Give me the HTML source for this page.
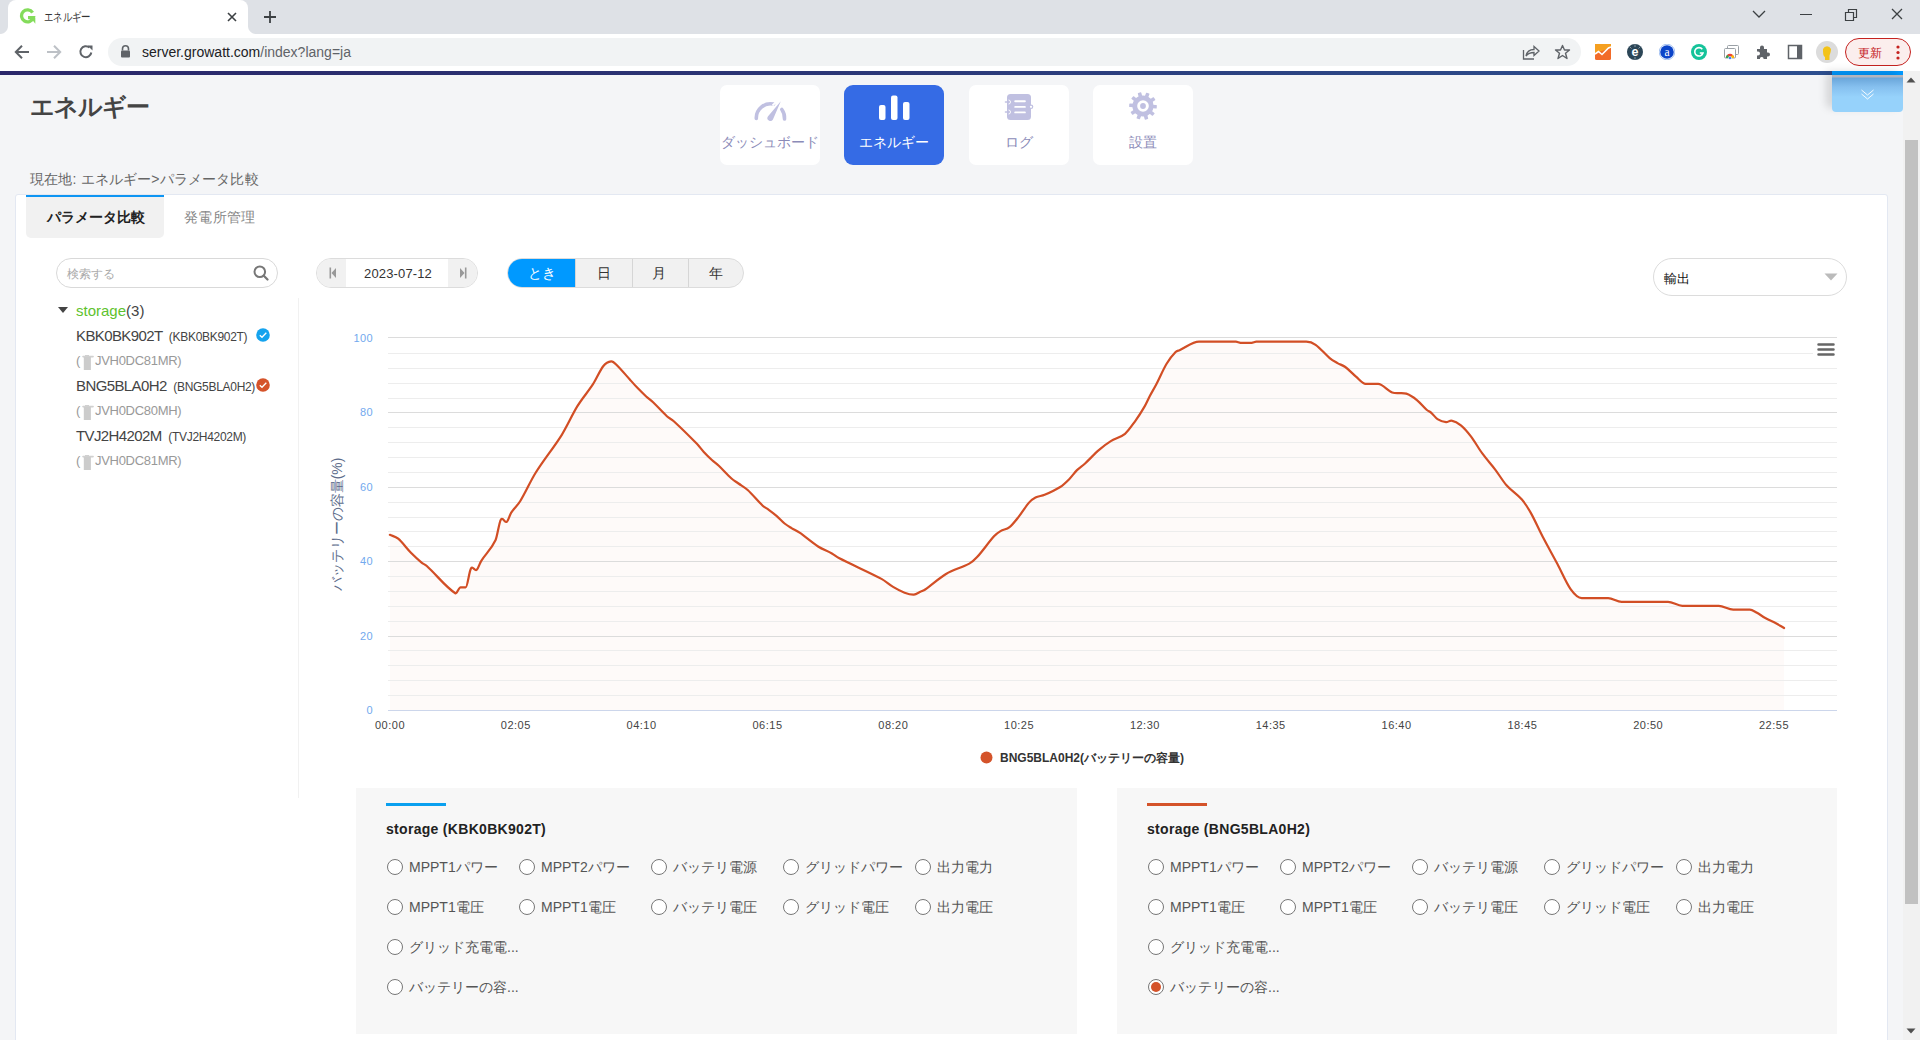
<!DOCTYPE html>
<html><head><meta charset="utf-8">
<style>
*{box-sizing:border-box;margin:0;padding:0}
html,body{width:1920px;height:1040px;overflow:hidden}
body{position:relative;font-family:"Liberation Sans",sans-serif;background:#f4f5f7;color:#333}
.a{position:absolute;white-space:nowrap}
#tabbar{left:0;top:0;width:1920px;height:34px;background:#dee1e6}
#tab{left:8px;top:0;width:240px;height:34px;background:#fff;border-radius:8px 8px 0 0}
#tab:before{content:"";position:absolute;left:-8px;bottom:0;width:8px;height:8px;background:radial-gradient(circle at 0 0,#dee1e6 7.5px,#fff 8.5px)}
#tab:after{content:"";position:absolute;right:-8px;bottom:0;width:8px;height:8px;background:radial-gradient(circle at 100% 0,#dee1e6 7.5px,#fff 8.5px)}
#toolbar{left:0;top:34px;width:1920px;height:37px;background:#fff}
#omni{left:108px;top:38px;width:1473px;height:28px;background:#f1f3f4;border-radius:14px}
#navy{left:0;top:71px;width:1832px;height:4px;background:linear-gradient(90deg,#2a276a 0%,#2b3474 40%,#2c4685 75%,#2d4f8f 100%)}
#navy2{left:1832px;top:71px;width:71px;height:4px;background:#0099ff}
#scroll{left:1903px;top:71px;width:17px;height:969px;background:#f1f1f1}
#thumb{left:1905px;top:140px;width:13px;height:764px;background:#c1c1c1}
#card{left:15px;top:194px;width:1873px;height:870px;background:#fff;border:1px solid #e3e8f2;border-radius:3px}
.nav{top:85px;width:100px;height:80px;background:#fff;border-radius:7px}
.nav .t{position:absolute;left:0;width:100%;top:133px;text-align:center}
.navt{top:134px;font-size:14px;color:#8b8bb8;text-align:center;width:100px}
.rad{width:16px;height:16px;border:1px solid #777;border-radius:50%;background:#fff}
.rl{font-size:14px;color:#555}
</style></head><body>
<div id="tabbar" class="a"></div>
<div id="tab" class="a"></div>
<div id="toolbar" class="a"></div>
<div id="omni" class="a"></div>
<div id="navy" class="a"></div>
<div id="navy2" class="a"></div>

<!-- tab contents -->
<svg class="a" style="left:19px;top:8px" width="18" height="17" viewBox="0 0 18 17"><path d="M13.6 4.6A6 6 0 1 0 14.3 9.6H9" fill="none" stroke="#84dc5b" stroke-width="3.3"/><path d="M11.5 9.6H16.3V15.8z" fill="#84dc5b"/></svg>
<div class="a" style="left:44px;top:9px;font-size:12px;color:#333;transform:scaleX(0.78);transform-origin:0 0">エネルギー</div>
<svg class="a" style="left:227px;top:12px" width="10" height="10" viewBox="0 0 10 10"><path d="M1 1L9 9M9 1L1 9" stroke="#3c4043" stroke-width="1.6"/></svg>
<svg class="a" style="left:263px;top:10px" width="14" height="14" viewBox="0 0 14 14"><path d="M7 1V13M1 7H13" stroke="#3c4043" stroke-width="1.8"/></svg>
<!-- window controls -->
<svg class="a" style="left:1752px;top:9px" width="14" height="10" viewBox="0 0 14 10"><path d="M1 2L7 8L13 2" fill="none" stroke="#3c4043" stroke-width="1.3"/></svg>
<div class="a" style="left:1800px;top:14px;width:12px;height:1px;background:#3c4043"></div>
<svg class="a" style="left:1844px;top:8px" width="14" height="14" viewBox="0 0 14 14"><path d="M1.5 4.5H9.5V12.5H1.5Z M4.5 4.5V1.5H12.5V9.5H9.5" fill="none" stroke="#3c4043" stroke-width="1.2"/></svg>
<svg class="a" style="left:1891px;top:8px" width="12" height="12" viewBox="0 0 12 12"><path d="M1 1L11 11M11 1L1 11" stroke="#3c4043" stroke-width="1.3"/></svg>
<!-- nav buttons -->
<svg class="a" style="left:14px;top:44px" width="16" height="16" viewBox="0 0 16 16"><path d="M15 8H2M8 1.8L1.8 8L8 14.2" fill="none" stroke="#5f6368" stroke-width="2"/></svg>
<svg class="a" style="left:46px;top:44px" width="16" height="16" viewBox="0 0 16 16"><path d="M1 8H14M8 1.8L14.2 8L8 14.2" fill="none" stroke="#bdc1c6" stroke-width="2"/></svg>
<svg class="a" style="left:78px;top:44px" width="16" height="16" viewBox="0 0 16 16"><path d="M13.3 8.5A5.5 5.5 0 1 1 11.5 3.6" fill="none" stroke="#5f6368" stroke-width="2"/><path d="M9.5 1.5H14.5V6.5Z" fill="#5f6368"/></svg>
<!-- omnibox -->
<svg class="a" style="left:120px;top:45px" width="11" height="13" viewBox="0 0 11 13"><path d="M2.5 5.5V3.8A3 3 0 0 1 8.5 3.8V5.5" fill="none" stroke="#5f6368" stroke-width="1.6"/><rect x="1" y="5.5" width="9" height="7" rx="1" fill="#5f6368"/></svg>
<div class="a" style="left:142px;top:44px;font-size:14px;color:#202124">server.growatt.com<span style="color:#5f6368">/index?lang=ja</span></div>
<svg class="a" style="left:1522px;top:44px" width="18" height="16" viewBox="0 0 18 16"><path d="M1.5 6V15H12" fill="none" stroke="#5f6368" stroke-width="1.3"/><path d="M4 12C5 7 8 5.5 12 5.5V2.5L17 7L12 11.5V8.5C8.5 8.5 6 9.5 4 12Z" fill="none" stroke="#5f6368" stroke-width="1.3"/></svg>
<svg class="a" style="left:1554px;top:44px" width="17" height="16" viewBox="0 0 17 16"><path d="M8.5 1.5L10.5 6H15.5L11.5 9.2L13 14.5L8.5 11.5L4 14.5L5.5 9.2L1.5 6H6.5Z" fill="none" stroke="#5f6368" stroke-width="1.4" stroke-linejoin="round"/></svg>
<!-- extensions -->
<svg class="a" style="left:1595px;top:44px" width="16" height="16" viewBox="0 0 16 16"><rect width="16" height="16" rx="1.5" fill="#f26b2a"/><path d="M0 0H16V4L0 9Z" fill="#f5a020"/><path d="M0 10L3.5 7.5L7 10.5L13.5 4L16 3" fill="none" stroke="#fff" stroke-width="1.6"/></svg>
<svg class="a" style="left:1627px;top:44px" width="16" height="16" viewBox="0 0 16 16"><circle cx="8" cy="8" r="8" fill="#2c4657"/><path d="M8 0.5V3M8 13V15.5M2.5 2.5L4.5 4.5M13.5 2.5L11.5 4.5" stroke="#9fb0bb" stroke-width="0.8"/><text x="8" y="12.2" font-size="12.5" font-weight="bold" fill="#fff" text-anchor="middle" font-family="Liberation Sans">e</text></svg>
<svg class="a" style="left:1659px;top:44px" width="16" height="16" viewBox="0 0 16 16"><circle cx="8" cy="8" r="7.8" fill="#fff" stroke="#8fb4ef" stroke-width="0.8"/><circle cx="8" cy="8" r="6.8" fill="#0b44c9"/><text x="8" y="11.8" font-size="11.5" fill="#fff" text-anchor="middle" font-family="Liberation Serif">a</text></svg>
<svg class="a" style="left:1691px;top:44px" width="16" height="16" viewBox="0 0 16 16"><circle cx="8" cy="8" r="8" fill="#15c39a"/><path d="M11.3 5.2A4.2 4.2 0 1 0 12 9H8.8" fill="none" stroke="#fff" stroke-width="1.6"/></svg>
<svg class="a" style="left:1723px;top:44px" width="17" height="16" viewBox="0 0 17 16"><rect x="4.5" y="1.5" width="11" height="9" rx="1" fill="#fff" stroke="#9aa0a6" stroke-width="1"/><rect x="1.5" y="4.5" width="11" height="9.5" rx="1" fill="#fff" stroke="#9aa0a6" stroke-width="1"/><path d="M2.8 14A4.2 4.2 0 0 1 11.2 14Z" fill="#ea4335"/><path d="M2.8 14A4.2 4.2 0 0 1 4.5 10.7L7 14Z" fill="#34a853"/><path d="M9.5 10.7A4.2 4.2 0 0 1 11.2 14H7Z" fill="#fbbc04"/><circle cx="7" cy="14" r="1.8" fill="#fff"/><circle cx="7" cy="14" r="1.3" fill="#4285f4"/></svg>
<svg class="a" style="left:1755px;top:44px" width="16" height="16" viewBox="0 0 16 16"><path d="M2 5H5V3.5A2 2 0 0 1 9 3.5V5H12V8.5H13A2 2 0 0 1 13 12.5H12V15H8.5V14A2 2 0 0 0 5 14V15H2V11.5H3A2 2 0 0 0 3 7.5H2Z" fill="#5f6368"/></svg>
<svg class="a" style="left:1787px;top:44px" width="16" height="16" viewBox="0 0 16 16"><rect x="1.5" y="1.5" width="13" height="13" fill="none" stroke="#5f6368" stroke-width="1.5"/><rect x="10" y="1.5" width="4.5" height="13" fill="#5f6368"/></svg>
<svg class="a" style="left:1816px;top:41px" width="22" height="22" viewBox="0 0 22 22"><circle cx="11" cy="11" r="11" fill="#dcdcdc"/><path d="M7 8A4.5 5 0 0 1 15 8C15 11 14 13 13.5 14.5V19H9V16C7 15 7 12 7 8Z" fill="#f3c318"/></svg>
<div class="a" style="left:1845px;top:38px;width:66px;height:28px;border:1.3px solid #c5221f;border-radius:14px;background:#fbeeed"></div>
<div class="a" style="left:1858px;top:45px;font-size:12px;color:#c5221f">更新</div>
<svg class="a" style="left:1895px;top:45px" width="6" height="15" viewBox="0 0 6 15"><circle cx="3" cy="2" r="1.6" fill="#c5221f"/><circle cx="3" cy="7.5" r="1.6" fill="#c5221f"/><circle cx="3" cy="13" r="1.6" fill="#c5221f"/></svg>

<!-- page header -->
<div class="a" style="left:30px;top:91px;font-size:24px;font-weight:bold;color:#444;letter-spacing:-1px">エネルギー</div>
<div class="a nav" style="left:720px"></div>
<div class="a nav" style="left:844px;background:#356be5;border-radius:9px"></div>
<div class="a nav" style="left:969px"></div>
<div class="a nav" style="left:1093px"></div>
<!-- icons -->
<svg class="a" style="left:745px;top:92px" width="50" height="36" viewBox="0 0 50 36"><path d="M11.3 26.5A14.2 14.2 0 0 1 28.5 12.1" fill="none" stroke="#c0c0e1" stroke-width="3.6" stroke-linecap="round"/><path d="M36.8 17.5A14.2 14.2 0 0 1 39.5 27" fill="none" stroke="#c0c0e1" stroke-width="3.6" stroke-linecap="round"/><path d="M35.8 9.2L27.95 27.58A3 3 0 0 1 22.85 24.42Z" fill="#c0c0e1"/><path d="M27.5 13.5L31 10" stroke="#fff" stroke-width="1.8"/></svg>
<svg class="a" style="left:878px;top:95px" width="32" height="26" viewBox="0 0 32 26"><rect x="1" y="10" width="6.5" height="15" rx="2" fill="#fff"/><rect x="13" y="0.5" width="6.5" height="24.5" rx="2" fill="#fff"/><rect x="25" y="7" width="6.5" height="18" rx="2" fill="#fff"/></svg>
<svg class="a" style="left:1000px;top:88px" width="40" height="36" viewBox="0 0 40 36"><rect x="7" y="6" width="24" height="26" rx="3.5" fill="#c0c0e1"/><path d="M5.5 14H9M5.5 24H9" stroke="#c0c0e1" stroke-width="1.6" stroke-linecap="round"/><path d="M8.5 12A2 2 0 0 1 8.5 16M8.5 22A2 2 0 0 1 8.5 26" fill="none" stroke="#fff" stroke-width="0.9"/><circle cx="31" cy="18.8" r="2.3" fill="#c0c0e1"/><circle cx="31" cy="18.8" r="1.1" fill="#fff"/><path d="M15.2 13.3H24.9M15.2 18.9H24.9M15.2 24.4H24.9" stroke="#fff" stroke-width="1.9" stroke-linecap="round"/></svg>
<svg class="a" style="left:1125px;top:88px" width="36" height="36" viewBox="0 0 36 36"><g fill="#c0c0e1"><circle cx="18" cy="18" r="10.6"/><rect x="16.2" y="4.2" width="3.6" height="27.6" rx="0.6" transform="rotate(-15 18 18)"/><rect x="16.2" y="4.2" width="3.6" height="27.6" rx="0.6" transform="rotate(21 18 18)"/><rect x="16.2" y="4.2" width="3.6" height="27.6" rx="0.6" transform="rotate(57 18 18)"/><rect x="16.2" y="4.2" width="3.6" height="27.6" rx="0.6" transform="rotate(93 18 18)"/><rect x="16.2" y="4.2" width="3.6" height="27.6" rx="0.6" transform="rotate(129 18 18)"/></g><circle cx="18" cy="18" r="5.8" fill="#fff"/><circle cx="18" cy="18" r="2.9" fill="#c0c0e1"/></svg>
<div class="a navt" style="left:720px">ダッシュボード</div>
<div class="a navt" style="left:844px;color:#fff">エネルギー</div>
<div class="a navt" style="left:969px">ログ</div>
<div class="a navt" style="left:1093px">設置</div>

<div class="a" style="left:30px;top:171px;font-size:14px;color:#666;letter-spacing:0.15px">現在地: エネルギー&gt;パラメータ比較</div>

<div id="card" class="a"></div>
<div class="a" style="left:26px;top:195px;width:138px;height:43px;background:#f1f1f1;border-top:2px solid #0d95f3;border-radius:0 0 5px 5px"></div>
<div class="a" style="left:47px;top:209px;font-size:14px;font-weight:bold;color:#222">パラメータ比較</div>
<div class="a" style="left:184px;top:209px;font-size:14px;color:#888;letter-spacing:0.3px">発電所管理</div>

<!-- sidebar -->
<div class="a" style="left:56px;top:258px;width:222px;height:30px;border:1px solid #d9d9d9;border-radius:15px;background:#fff"></div>
<div class="a" style="left:67px;top:266px;font-size:12px;color:#aaa">検索する</div>
<svg class="a" style="left:253px;top:265px" width="16" height="16" viewBox="0 0 16 16"><circle cx="6.8" cy="6.8" r="5.3" fill="none" stroke="#777" stroke-width="2"/><path d="M10.8 10.8L14.5 14.5" stroke="#777" stroke-width="2.2" stroke-linecap="round"/></svg>
<div class="a" style="left:298px;top:298px;width:1px;height:500px;background:#f1f1f1"></div>
<svg class="a" style="left:58px;top:307px" width="10" height="7" viewBox="0 0 10 7"><path d="M0 0H10L5 6Z" fill="#444"/></svg>
<div class="a" style="left:76px;top:302px;font-size:15px;color:#5ec22e">storage<span style="color:#444">(3)</span></div>

<div class="a" style="left:76px;top:327px;font-size:15px;color:#444;letter-spacing:-0.6px">KBK0BK902T <span style="font-size:12px;letter-spacing:-0.3px;margin-left:3px">(KBK0BK902T)</span></div>
<svg class="a" style="left:256px;top:328px" width="14" height="14" viewBox="0 0 14 14"><circle cx="7" cy="7" r="6.8" fill="#15a3ee"/><path d="M3.8 7.2L6 9.3L10.3 4.8" fill="none" stroke="#fff" stroke-width="1.3"/></svg>
<div class="a" style="left:76px;top:353px;font-size:13px;color:#999;letter-spacing:-0.3px">(<span style="display:inline-block;width:11px;height:14px;vertical-align:-2px;margin:0 2px"></span>JVH0DC81MR)</div>
<div class="a" style="left:76px;top:377px;font-size:15px;color:#444;letter-spacing:-0.6px">BNG5BLA0H2 <span style="font-size:12px;letter-spacing:-0.3px;margin-left:3px">(BNG5BLA0H2)</span></div>
<svg class="a" style="left:256px;top:378px" width="14" height="14" viewBox="0 0 14 14"><circle cx="7" cy="7" r="6.8" fill="#d5532a"/><path d="M3.8 7.2L6 9.3L10.3 4.8" fill="none" stroke="#fff" stroke-width="1.3"/></svg>
<div class="a" style="left:76px;top:403px;font-size:13px;color:#999;letter-spacing:-0.3px">(<span style="display:inline-block;width:11px;height:14px;vertical-align:-2px;margin:0 2px"></span>JVH0DC80MH)</div>
<div class="a" style="left:76px;top:427px;font-size:15px;color:#444;letter-spacing:-0.6px">TVJ2H4202M <span style="font-size:12px;letter-spacing:-0.3px;margin-left:3px">(TVJ2H4202M)</span></div>
<div class="a" style="left:76px;top:453px;font-size:13px;color:#999;letter-spacing:-0.3px">(<span style="display:inline-block;width:11px;height:14px;vertical-align:-2px;margin:0 2px"></span>JVH0DC81MR)</div>
<svg class="a" style="left:82px;top:354px" width="12" height="16" viewBox="0 0 12 16"><rect x="3" y="1" width="4" height="1.5" fill="#d0d0d0"/><rect x="0.2" y="1.8" width="11.7" height="1.6" rx="0.8" fill="#d0d0d0"/><rect x="1.8" y="3" width="7.1" height="13" fill="#cccccc"/></svg>
<svg class="a" style="left:82px;top:404px" width="12" height="16" viewBox="0 0 12 16"><rect x="3" y="1" width="4" height="1.5" fill="#d0d0d0"/><rect x="0.2" y="1.8" width="11.7" height="1.6" rx="0.8" fill="#d0d0d0"/><rect x="1.8" y="3" width="7.1" height="13" fill="#cccccc"/></svg>
<svg class="a" style="left:82px;top:454px" width="12" height="16" viewBox="0 0 12 16"><rect x="3" y="1" width="4" height="1.5" fill="#d0d0d0"/><rect x="0.2" y="1.8" width="11.7" height="1.6" rx="0.8" fill="#d0d0d0"/><rect x="1.8" y="3" width="7.1" height="13" fill="#cccccc"/></svg>

<!-- date picker -->
<div class="a" style="left:316px;top:258px;width:162px;height:30px;border:1px solid #dcdcdc;border-radius:15px;background:#fff;overflow:hidden">
  <div class="a" style="left:0;top:0;width:29px;height:28px;background:#f1f1f1"></div>
  <div class="a" style="right:0;top:0;width:29px;height:28px;background:#f1f1f1"></div>
</div>
<svg class="a" style="left:329px;top:267px" width="8" height="12" viewBox="0 0 8 12"><rect x="0.5" y="0.5" width="1.6" height="11" fill="#999"/><path d="M7 1V11L2.5 6Z" fill="#999"/></svg>
<svg class="a" style="left:459px;top:267px" width="8" height="12" viewBox="0 0 8 12"><rect x="5.9" y="0.5" width="1.6" height="11" fill="#999"/><path d="M1 1V11L5.5 6Z" fill="#999"/></svg>
<div class="a" style="left:364px;top:266px;font-size:13px;color:#333;letter-spacing:0.15px">2023-07-12</div>

<div class="a" style="left:507px;top:258px;width:237px;height:30px;border:1px solid #dcdcdc;border-radius:15px;background:#f1f1f1;overflow:hidden">
  <div class="a" style="left:-1px;top:-1px;width:69px;height:30px;background:#0099ff"></div>
  <div class="a" style="left:124px;top:0;width:1px;height:28px;background:#d6d6d6"></div>
  <div class="a" style="left:180px;top:0;width:1px;height:28px;background:#d6d6d6"></div>
  <div class="a" style="left:67px;top:0;width:1px;height:28px;background:#d6d6d6"></div>
</div>
<div class="a" style="left:528px;top:265px;font-size:14px;color:#fff">とき</div>
<div class="a" style="left:597px;top:265px;font-size:14px;color:#333">日</div>
<div class="a" style="left:652px;top:265px;font-size:14px;color:#333">月</div>
<div class="a" style="left:709px;top:265px;font-size:14px;color:#333">年</div>

<div class="a" style="left:1653px;top:258px;width:194px;height:38px;border:1px solid #dcdcdc;border-radius:19px;background:#fff"></div>
<div class="a" style="left:1664px;top:270px;font-size:13px;color:#111">輸出</div>
<svg class="a" style="left:1824px;top:273px" width="14" height="8" viewBox="0 0 14 8"><path d="M0.5 0.5H13.5L7 7.5Z" fill="#bbb"/></svg>

<!-- chart -->
<svg class="a" style="left:0;top:0" width="1920" height="1040" viewBox="0 0 1920 1040">
<path d="M389.9 534.8 C392.7 536.1 395.4 536.3 398.2 538.7 C402.5 542.4 406.9 548.6 411.2 553.0 C414.7 556.5 418.1 559.7 421.6 562.6 C423.3 564.0 425.1 564.4 426.8 566.0 C436.3 574.6 445.8 587.2 455.3 593.2 C457.0 594.3 458.8 587.3 460.5 587.3 C462.2 587.3 464.0 587.3 465.7 587.3 C467.4 587.3 469.2 571.4 470.9 568.6 C472.8 565.6 474.7 571.3 476.6 569.9 C478.2 568.7 479.7 563.3 481.3 560.8 C486.1 553.3 490.8 550.0 495.6 540.0 C497.3 536.3 499.1 522.5 500.8 519.7 C502.8 516.5 504.8 523.1 506.8 521.8 C508.3 520.8 509.7 515.0 511.2 512.7 C514.2 508.0 517.3 506.0 520.3 501.0 C525.5 492.6 530.6 480.7 535.8 472.5 C544.5 458.7 553.1 448.6 561.8 434.8 C567.0 426.5 572.2 414.6 577.4 406.2 C582.6 397.8 587.8 392.2 593.0 384.2 C596.5 378.8 599.9 370.4 603.4 366.0 C606.0 362.7 608.6 361.6 611.2 361.3 C612.9 361.1 614.7 363.0 616.4 364.7 C620.7 368.9 625.1 374.2 629.4 379.0 C631.9 381.8 634.4 384.7 636.9 387.3 C640.0 390.5 643.1 393.6 646.2 396.5 C648.5 398.6 650.8 400.1 653.1 402.3 C657.7 406.7 662.3 412.0 666.9 416.2 C669.2 418.3 671.5 419.1 673.8 421.2 C681.5 428.3 689.2 435.9 696.9 443.8 C699.2 446.2 701.5 449.4 703.8 451.9 C706.5 454.8 709.2 457.5 711.9 460.0 C714.2 462.1 716.5 463.6 718.8 465.8 C723.0 469.8 727.3 474.7 731.5 478.5 C733.8 480.6 736.2 481.8 738.5 483.5 C741.6 485.7 744.6 487.2 747.7 490.0 C752.7 494.6 757.7 501.0 762.7 505.7 C764.6 507.5 766.6 508.2 768.5 509.6 C771.2 511.6 773.8 513.5 776.5 515.8 C779.2 518.1 781.9 521.3 784.6 523.5 C786.9 525.4 789.2 526.7 791.5 528.1 C794.2 529.8 796.9 530.8 799.6 532.7 C805.8 537.0 811.9 542.5 818.1 546.5 C822.7 549.5 827.3 550.9 831.9 553.5 C834.2 554.8 836.6 556.9 838.9 558.1 C853.1 565.4 867.3 571.4 881.5 578.9 C885.4 581.0 889.2 584.6 893.1 586.9 C896.9 589.2 900.8 591.3 904.6 592.7 C907.7 593.8 910.8 594.8 913.9 594.6 C916.2 594.4 918.5 592.6 920.8 591.6 C922.3 590.9 923.7 590.5 925.2 589.5 C932.1 584.7 939.1 578.1 946.0 574.0 C953.8 569.4 961.5 567.8 969.3 563.6 C971.9 562.2 974.5 560.0 977.1 557.1 C982.7 550.9 988.4 542.6 994.0 536.3 C996.2 533.9 998.3 532.4 1000.5 531.1 C1003.5 529.3 1006.5 529.6 1009.5 527.2 C1012.5 524.8 1015.6 520.7 1018.6 516.9 C1022.1 512.5 1025.5 506.6 1029.0 502.6 C1031.2 500.1 1033.3 498.5 1035.5 497.4 C1038.5 495.9 1041.6 496.1 1044.6 494.8 C1049.8 492.6 1055.0 490.3 1060.2 487.0 C1063.2 485.1 1066.2 482.2 1069.2 479.2 C1071.8 476.6 1074.4 472.7 1077.0 470.1 C1079.6 467.5 1082.2 466.1 1084.8 463.7 C1089.6 459.3 1094.3 454.0 1099.1 449.9 C1103.0 446.5 1106.9 443.5 1110.8 441.1 C1115.5 438.2 1120.3 437.7 1125.0 433.8 C1128.5 430.9 1131.9 425.6 1135.4 420.8 C1138.4 416.6 1141.5 411.8 1144.5 406.6 C1146.2 403.6 1148.0 399.5 1149.7 396.2 C1151.9 392.1 1154.0 388.7 1156.2 384.5 C1159.7 377.8 1163.1 369.5 1166.6 363.7 C1169.6 358.7 1172.6 355.2 1175.6 352.1 C1176.9 350.7 1178.2 350.8 1179.5 350.2 C1186.0 347.3 1192.5 341.7 1199.0 341.7 C1201.0 341.7 1203.0 341.7 1205.0 341.7 C1213.3 341.7 1221.7 341.7 1230.0 341.7 C1232.0 341.7 1233.9 341.7 1235.9 341.7 C1237.5 341.7 1239.0 342.8 1240.6 342.8 C1244.3 342.8 1247.9 342.8 1251.6 342.8 C1253.2 342.8 1254.7 341.7 1256.3 341.7 C1258.2 341.7 1260.1 341.7 1262.0 341.7 C1274.7 341.7 1287.3 341.7 1300.0 341.7 C1302.1 341.7 1304.2 341.7 1306.3 341.7 C1309.4 341.7 1312.5 342.6 1315.6 344.8 C1320.3 348.1 1325.0 354.2 1329.7 358.1 C1332.3 360.3 1334.9 361.6 1337.5 363.1 C1340.1 364.6 1342.7 365.1 1345.3 367.0 C1349.0 369.7 1352.6 373.8 1356.3 376.9 C1359.4 379.5 1362.5 383.9 1365.6 383.9 C1369.8 383.9 1373.9 383.9 1378.1 383.9 C1382.8 383.9 1387.5 390.9 1392.2 392.5 C1396.9 394.1 1401.6 392.1 1406.3 393.6 C1409.9 394.7 1413.6 397.4 1417.2 400.3 C1420.3 402.8 1423.5 406.9 1426.6 409.7 C1428.2 411.1 1429.7 411.4 1431.3 412.8 C1433.4 414.6 1435.4 417.8 1437.5 419.1 C1440.4 420.9 1443.2 421.9 1446.1 422.2 C1447.9 422.4 1449.8 420.2 1451.6 420.6 C1454.7 421.2 1457.8 422.8 1460.9 425.3 C1464.3 428.1 1467.7 432.1 1471.1 436.6 C1474.8 441.4 1478.4 448.2 1482.1 453.2 C1486.5 459.3 1491.0 464.0 1495.4 469.8 C1499.1 474.7 1502.8 481.1 1506.5 485.3 C1511.6 491.1 1516.8 493.8 1521.9 499.6 C1524.9 503.0 1527.8 507.6 1530.8 512.9 C1534.9 520.2 1538.9 529.5 1543.0 537.3 C1547.8 546.5 1552.5 554.8 1557.3 563.8 C1561.7 572.1 1566.2 583.0 1570.6 589.2 C1574.3 594.4 1578.0 598.1 1581.7 598.1 C1584.5 598.1 1587.2 598.1 1590.0 598.1 C1593.3 598.1 1596.7 598.1 1600.0 598.1 C1602.7 598.1 1605.5 598.1 1608.2 598.1 C1612.6 598.1 1617.1 601.9 1621.5 601.9 C1624.3 601.9 1627.2 601.9 1630.0 601.9 C1640.0 601.9 1650.0 601.9 1660.0 601.9 C1662.7 601.9 1665.3 601.9 1668.0 601.9 C1672.8 601.9 1677.5 605.8 1682.3 605.8 C1684.9 605.8 1687.4 605.8 1690.0 605.8 C1697.0 605.8 1704.0 605.8 1711.0 605.8 C1713.6 605.8 1716.2 605.8 1718.8 605.8 C1723.6 605.8 1728.4 609.6 1733.2 609.6 C1735.8 609.6 1738.4 609.6 1741.0 609.6 C1743.9 609.6 1746.9 609.6 1749.8 609.6 C1752.0 609.6 1754.3 611.3 1756.5 612.5 C1759.4 614.1 1762.4 616.4 1765.3 618.0 C1769.0 620.0 1772.7 621.5 1776.4 623.5 C1779.0 624.9 1781.5 626.5 1784.1 628.0 L1784.1 710 L389.9 710 Z" fill="#fefaf9"/>
<path d="M388 695.5H1837 M388 680.5H1837 M388 665.5H1837 M388 650.5H1837 M388 621.5H1837 M388 606.5H1837 M388 591.5H1837 M388 576.5H1837 M388 546.5H1837 M388 531.5H1837 M388 517.5H1837 M388 502.5H1837 M388 472.5H1837 M388 457.5H1837 M388 442.5H1837 M388 427.5H1837 M388 398.5H1837 M388 383.5H1837 M388 368.5H1837 M388 353.5H1837" stroke="#ededed" stroke-width="1" fill="none"/><path d="M388 636.5H1837 M388 561.5H1837 M388 487.5H1837 M388 412.5H1837 M388 337.5H1837" stroke="#dcdcdc" stroke-width="1" fill="none"/>
<path d="M388 710.5H1837" stroke="#ccd6eb" stroke-width="1"/>
<path d="M389.9 534.8 C392.7 536.1 395.4 536.3 398.2 538.7 C402.5 542.4 406.9 548.6 411.2 553.0 C414.7 556.5 418.1 559.7 421.6 562.6 C423.3 564.0 425.1 564.4 426.8 566.0 C436.3 574.6 445.8 587.2 455.3 593.2 C457.0 594.3 458.8 587.3 460.5 587.3 C462.2 587.3 464.0 587.3 465.7 587.3 C467.4 587.3 469.2 571.4 470.9 568.6 C472.8 565.6 474.7 571.3 476.6 569.9 C478.2 568.7 479.7 563.3 481.3 560.8 C486.1 553.3 490.8 550.0 495.6 540.0 C497.3 536.3 499.1 522.5 500.8 519.7 C502.8 516.5 504.8 523.1 506.8 521.8 C508.3 520.8 509.7 515.0 511.2 512.7 C514.2 508.0 517.3 506.0 520.3 501.0 C525.5 492.6 530.6 480.7 535.8 472.5 C544.5 458.7 553.1 448.6 561.8 434.8 C567.0 426.5 572.2 414.6 577.4 406.2 C582.6 397.8 587.8 392.2 593.0 384.2 C596.5 378.8 599.9 370.4 603.4 366.0 C606.0 362.7 608.6 361.6 611.2 361.3 C612.9 361.1 614.7 363.0 616.4 364.7 C620.7 368.9 625.1 374.2 629.4 379.0 C631.9 381.8 634.4 384.7 636.9 387.3 C640.0 390.5 643.1 393.6 646.2 396.5 C648.5 398.6 650.8 400.1 653.1 402.3 C657.7 406.7 662.3 412.0 666.9 416.2 C669.2 418.3 671.5 419.1 673.8 421.2 C681.5 428.3 689.2 435.9 696.9 443.8 C699.2 446.2 701.5 449.4 703.8 451.9 C706.5 454.8 709.2 457.5 711.9 460.0 C714.2 462.1 716.5 463.6 718.8 465.8 C723.0 469.8 727.3 474.7 731.5 478.5 C733.8 480.6 736.2 481.8 738.5 483.5 C741.6 485.7 744.6 487.2 747.7 490.0 C752.7 494.6 757.7 501.0 762.7 505.7 C764.6 507.5 766.6 508.2 768.5 509.6 C771.2 511.6 773.8 513.5 776.5 515.8 C779.2 518.1 781.9 521.3 784.6 523.5 C786.9 525.4 789.2 526.7 791.5 528.1 C794.2 529.8 796.9 530.8 799.6 532.7 C805.8 537.0 811.9 542.5 818.1 546.5 C822.7 549.5 827.3 550.9 831.9 553.5 C834.2 554.8 836.6 556.9 838.9 558.1 C853.1 565.4 867.3 571.4 881.5 578.9 C885.4 581.0 889.2 584.6 893.1 586.9 C896.9 589.2 900.8 591.3 904.6 592.7 C907.7 593.8 910.8 594.8 913.9 594.6 C916.2 594.4 918.5 592.6 920.8 591.6 C922.3 590.9 923.7 590.5 925.2 589.5 C932.1 584.7 939.1 578.1 946.0 574.0 C953.8 569.4 961.5 567.8 969.3 563.6 C971.9 562.2 974.5 560.0 977.1 557.1 C982.7 550.9 988.4 542.6 994.0 536.3 C996.2 533.9 998.3 532.4 1000.5 531.1 C1003.5 529.3 1006.5 529.6 1009.5 527.2 C1012.5 524.8 1015.6 520.7 1018.6 516.9 C1022.1 512.5 1025.5 506.6 1029.0 502.6 C1031.2 500.1 1033.3 498.5 1035.5 497.4 C1038.5 495.9 1041.6 496.1 1044.6 494.8 C1049.8 492.6 1055.0 490.3 1060.2 487.0 C1063.2 485.1 1066.2 482.2 1069.2 479.2 C1071.8 476.6 1074.4 472.7 1077.0 470.1 C1079.6 467.5 1082.2 466.1 1084.8 463.7 C1089.6 459.3 1094.3 454.0 1099.1 449.9 C1103.0 446.5 1106.9 443.5 1110.8 441.1 C1115.5 438.2 1120.3 437.7 1125.0 433.8 C1128.5 430.9 1131.9 425.6 1135.4 420.8 C1138.4 416.6 1141.5 411.8 1144.5 406.6 C1146.2 403.6 1148.0 399.5 1149.7 396.2 C1151.9 392.1 1154.0 388.7 1156.2 384.5 C1159.7 377.8 1163.1 369.5 1166.6 363.7 C1169.6 358.7 1172.6 355.2 1175.6 352.1 C1176.9 350.7 1178.2 350.8 1179.5 350.2 C1186.0 347.3 1192.5 341.7 1199.0 341.7 C1201.0 341.7 1203.0 341.7 1205.0 341.7 C1213.3 341.7 1221.7 341.7 1230.0 341.7 C1232.0 341.7 1233.9 341.7 1235.9 341.7 C1237.5 341.7 1239.0 342.8 1240.6 342.8 C1244.3 342.8 1247.9 342.8 1251.6 342.8 C1253.2 342.8 1254.7 341.7 1256.3 341.7 C1258.2 341.7 1260.1 341.7 1262.0 341.7 C1274.7 341.7 1287.3 341.7 1300.0 341.7 C1302.1 341.7 1304.2 341.7 1306.3 341.7 C1309.4 341.7 1312.5 342.6 1315.6 344.8 C1320.3 348.1 1325.0 354.2 1329.7 358.1 C1332.3 360.3 1334.9 361.6 1337.5 363.1 C1340.1 364.6 1342.7 365.1 1345.3 367.0 C1349.0 369.7 1352.6 373.8 1356.3 376.9 C1359.4 379.5 1362.5 383.9 1365.6 383.9 C1369.8 383.9 1373.9 383.9 1378.1 383.9 C1382.8 383.9 1387.5 390.9 1392.2 392.5 C1396.9 394.1 1401.6 392.1 1406.3 393.6 C1409.9 394.7 1413.6 397.4 1417.2 400.3 C1420.3 402.8 1423.5 406.9 1426.6 409.7 C1428.2 411.1 1429.7 411.4 1431.3 412.8 C1433.4 414.6 1435.4 417.8 1437.5 419.1 C1440.4 420.9 1443.2 421.9 1446.1 422.2 C1447.9 422.4 1449.8 420.2 1451.6 420.6 C1454.7 421.2 1457.8 422.8 1460.9 425.3 C1464.3 428.1 1467.7 432.1 1471.1 436.6 C1474.8 441.4 1478.4 448.2 1482.1 453.2 C1486.5 459.3 1491.0 464.0 1495.4 469.8 C1499.1 474.7 1502.8 481.1 1506.5 485.3 C1511.6 491.1 1516.8 493.8 1521.9 499.6 C1524.9 503.0 1527.8 507.6 1530.8 512.9 C1534.9 520.2 1538.9 529.5 1543.0 537.3 C1547.8 546.5 1552.5 554.8 1557.3 563.8 C1561.7 572.1 1566.2 583.0 1570.6 589.2 C1574.3 594.4 1578.0 598.1 1581.7 598.1 C1584.5 598.1 1587.2 598.1 1590.0 598.1 C1593.3 598.1 1596.7 598.1 1600.0 598.1 C1602.7 598.1 1605.5 598.1 1608.2 598.1 C1612.6 598.1 1617.1 601.9 1621.5 601.9 C1624.3 601.9 1627.2 601.9 1630.0 601.9 C1640.0 601.9 1650.0 601.9 1660.0 601.9 C1662.7 601.9 1665.3 601.9 1668.0 601.9 C1672.8 601.9 1677.5 605.8 1682.3 605.8 C1684.9 605.8 1687.4 605.8 1690.0 605.8 C1697.0 605.8 1704.0 605.8 1711.0 605.8 C1713.6 605.8 1716.2 605.8 1718.8 605.8 C1723.6 605.8 1728.4 609.6 1733.2 609.6 C1735.8 609.6 1738.4 609.6 1741.0 609.6 C1743.9 609.6 1746.9 609.6 1749.8 609.6 C1752.0 609.6 1754.3 611.3 1756.5 612.5 C1759.4 614.1 1762.4 616.4 1765.3 618.0 C1769.0 620.0 1772.7 621.5 1776.4 623.5 C1779.0 624.9 1781.5 626.5 1784.1 628.0" fill="none" stroke="#d24e25" stroke-width="2.2" stroke-linejoin="round" stroke-linecap="round"/>
<g font-family="Liberation Sans" font-size="11" fill="#72a9ee" letter-spacing="0.4"><text x="373" y="714.0" text-anchor="end">0</text><text x="373" y="639.5" text-anchor="end">20</text><text x="373" y="565.0" text-anchor="end">40</text><text x="373" y="490.5" text-anchor="end">60</text><text x="373" y="416.0" text-anchor="end">80</text><text x="373" y="341.5" text-anchor="end">100</text></g>
<g font-family="Liberation Sans" font-size="11" fill="#444" text-anchor="middle" letter-spacing="0.5"><text x="390.0" y="729">00:00</text><text x="515.8" y="729">02:05</text><text x="641.6" y="729">04:10</text><text x="767.5" y="729">06:15</text><text x="893.3" y="729">08:20</text><text x="1019.1" y="729">10:25</text><text x="1144.9" y="729">12:30</text><text x="1270.7" y="729">14:35</text><text x="1396.6" y="729">16:40</text><text x="1522.4" y="729">18:45</text><text x="1648.2" y="729">20:50</text><text x="1774.0" y="729">22:55</text></g>
<text transform="translate(342 524.5) rotate(-90)" text-anchor="middle" font-size="13.8" fill="#5c6b8a">バッテリーの容量(%)</text>
<rect x="1813" y="338" width="25" height="22" fill="#fff"/>
<path d="M1818.5 344.5H1833.5M1818.5 349.5H1833.5M1818.5 354.5H1833.5" stroke="#666" stroke-width="2.5" stroke-linecap="round"/>
<circle cx="986.5" cy="757.5" r="6" fill="#d4532a"/>
<text x="1000" y="762" font-size="12" font-weight="bold" fill="#333">BNG5BLA0H2(バッテリーの容量)</text>
</svg>

<!-- bottom panels -->
<div class="a" style="left:356px;top:788px;width:721px;height:246px;background:#f7f7f7"></div>
<div class="a" style="left:386px;top:803px;width:60px;height:3px;background:#0aa0ef"></div>
<div class="a" style="left:386px;top:821px;font-size:14px;font-weight:bold;color:#222;letter-spacing:0.3px">storage (KBK0BK902T)</div>
<div class="a" style="left:1117px;top:788px;width:720px;height:246px;background:#f7f7f7"></div>
<div class="a" style="left:1147px;top:803px;width:60px;height:3px;background:#d4532a"></div>
<div class="a" style="left:1147px;top:821px;font-size:14px;font-weight:bold;color:#222;letter-spacing:0.3px">storage (BNG5BLA0H2)</div>
<div class="a rad" style="left:387px;top:859px"></div><div class="a rl" style="left:409px;top:859px">MPPT1パワー</div>
<div class="a rad" style="left:519px;top:859px"></div><div class="a rl" style="left:541px;top:859px">MPPT2パワー</div>
<div class="a rad" style="left:651px;top:859px"></div><div class="a rl" style="left:673px;top:859px">バッテリ電源</div>
<div class="a rad" style="left:783px;top:859px"></div><div class="a rl" style="left:805px;top:859px">グリッドパワー</div>
<div class="a rad" style="left:915px;top:859px"></div><div class="a rl" style="left:937px;top:859px">出力電力</div>
<div class="a rad" style="left:387px;top:899px"></div><div class="a rl" style="left:409px;top:899px">MPPT1電圧</div>
<div class="a rad" style="left:519px;top:899px"></div><div class="a rl" style="left:541px;top:899px">MPPT1電圧</div>
<div class="a rad" style="left:651px;top:899px"></div><div class="a rl" style="left:673px;top:899px">バッテリ電圧</div>
<div class="a rad" style="left:783px;top:899px"></div><div class="a rl" style="left:805px;top:899px">グリッド電圧</div>
<div class="a rad" style="left:915px;top:899px"></div><div class="a rl" style="left:937px;top:899px">出力電圧</div>
<div class="a rad" style="left:387px;top:939px"></div><div class="a rl" style="left:409px;top:939px">グリッド充電電...</div>
<div class="a rad" style="left:387px;top:979px"></div><div class="a rl" style="left:409px;top:979px">バッテリーの容...</div>
<div class="a rad" style="left:1148px;top:859px"></div><div class="a rl" style="left:1170px;top:859px">MPPT1パワー</div>
<div class="a rad" style="left:1280px;top:859px"></div><div class="a rl" style="left:1302px;top:859px">MPPT2パワー</div>
<div class="a rad" style="left:1412px;top:859px"></div><div class="a rl" style="left:1434px;top:859px">バッテリ電源</div>
<div class="a rad" style="left:1544px;top:859px"></div><div class="a rl" style="left:1566px;top:859px">グリッドパワー</div>
<div class="a rad" style="left:1676px;top:859px"></div><div class="a rl" style="left:1698px;top:859px">出力電力</div>
<div class="a rad" style="left:1148px;top:899px"></div><div class="a rl" style="left:1170px;top:899px">MPPT1電圧</div>
<div class="a rad" style="left:1280px;top:899px"></div><div class="a rl" style="left:1302px;top:899px">MPPT1電圧</div>
<div class="a rad" style="left:1412px;top:899px"></div><div class="a rl" style="left:1434px;top:899px">バッテリ電圧</div>
<div class="a rad" style="left:1544px;top:899px"></div><div class="a rl" style="left:1566px;top:899px">グリッド電圧</div>
<div class="a rad" style="left:1676px;top:899px"></div><div class="a rl" style="left:1698px;top:899px">出力電圧</div>
<div class="a rad" style="left:1148px;top:939px"></div><div class="a rl" style="left:1170px;top:939px">グリッド充電電...</div>
<div class="a rad" style="left:1148px;top:979px"><div style="position:absolute;left:2px;top:2px;width:10px;height:10px;border-radius:50%;background:#d4532a"></div></div><div class="a rl" style="left:1170px;top:979px">バッテリーの容...</div>


<!-- floating btn -->
<div class="a" style="left:1832px;top:75px;width:71px;height:37px;border-radius:0 0 4px 4px;box-shadow:-6px -4px 8px rgba(0,0,0,0.13);background:linear-gradient(180deg,#b4b4bb 0px,#b0b4c0 2px,#6aa6da 3px,#86c0ef 12px,#96d2fb 22px,#96d2fb 100%)"></div>
<svg class="a" style="left:1860px;top:89px" width="15" height="11" viewBox="0 0 15 11"><path d="M1.5 1L7.5 6L13.5 1M1.5 5L7.5 10L13.5 5" fill="none" stroke="#fff" stroke-width="0.9"/></svg>

<div id="scroll" class="a"></div>
<div id="thumb" class="a"></div>
<svg class="a" style="left:1906px;top:77px" width="10" height="6" viewBox="0 0 10 6"><path d="M0.5 5.5H9.5L5 0.5Z" fill="#505050"/></svg>
<svg class="a" style="left:1906px;top:1028px" width="10" height="6" viewBox="0 0 10 6"><path d="M0.5 0.5H9.5L5 5.5Z" fill="#505050"/></svg>
</body></html>
